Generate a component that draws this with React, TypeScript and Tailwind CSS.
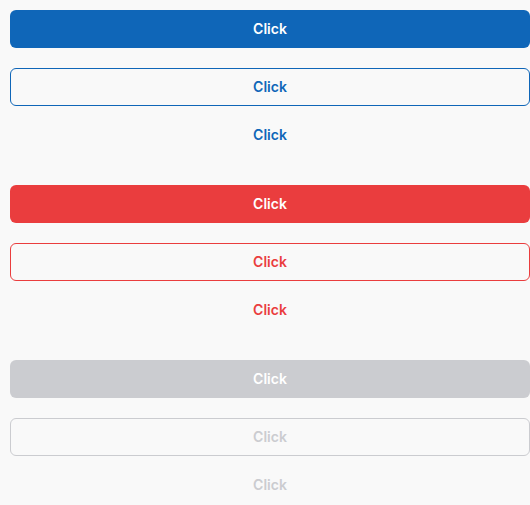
const groups = [
  {
    filled: "bg-[#0f66b8] text-white",
    outline: "border-[#0f66b8] text-[#0f66b8]",
    text: "text-[#0f66b8]",
  },
  {
    filled: "bg-[#ea3d3e] text-white",
    outline: "border-[#ea3d3e] text-[#ea3d3e]",
    text: "text-[#ea3d3e]",
  },
  {
    filled: "bg-[#cbccd0] text-white",
    outline: "border-[#cbccd0] text-[#cbccd0]",
    text: "text-[#cbccd0]",
  },
]

const App = () => {
  return (
    <div className="min-h-screen bg-[#f9f9f9] pl-[10px] pt-[10px] font-['Inter',sans-serif] text-[14px] font-semibold">
      {groups.map((g, i) => (
        <div key={i} className={i > 0 ? "mt-[41px]" : ""}>
          <button className={`flex h-[38px] w-[520px] items-center justify-center rounded-md pb-px ${g.filled}`}>
            Click
          </button>
          <button className={`mt-5 flex h-[38px] w-[520px] items-center justify-center rounded-md border bg-[#f9f9f9] pb-px ${g.outline}`}>
            Click
          </button>
          <button className={`mt-5 flex h-[18px] w-[520px] items-center justify-center pb-px ${g.text}`}>
            Click
          </button>
        </div>
      ))}
    </div>
  )
}

export default App
